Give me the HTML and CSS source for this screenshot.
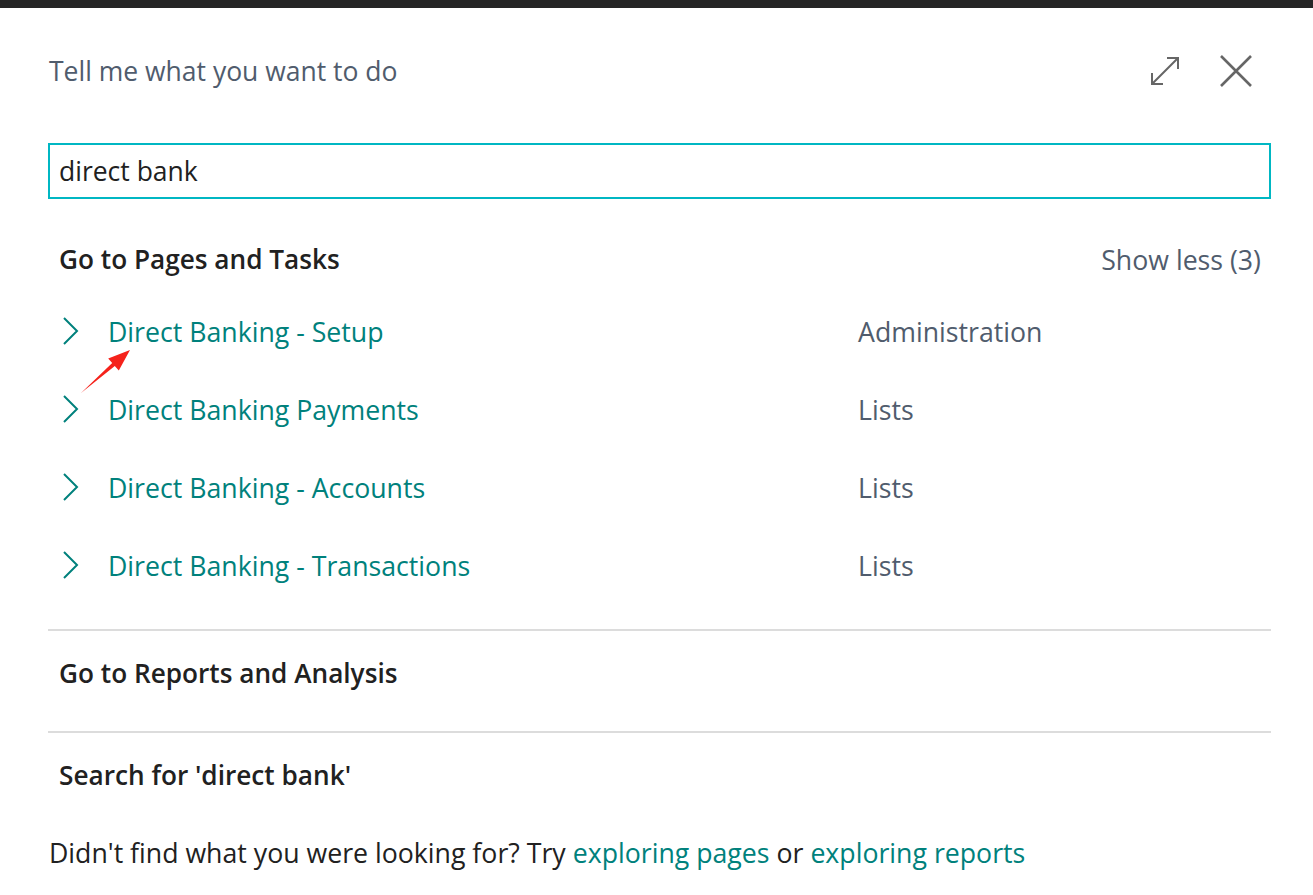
FILE: index.html
```html
<!DOCTYPE html>
<html lang="en">
<head>
    <meta charset="UTF-8">
    <meta name="viewport" content="width=device-width, initial-scale=1.0">
    <title>Tell me what you want to do</title>
    <link rel="stylesheet" href="styles.css">
</head>
<body>
    <div class="topbar"></div>
    <div class="dialog">
        <div class="dialog-header">
            <h1>Tell me what you want to do</h1>
            <div class="header-actions">
                <button class="icon-btn" title="Expand">
                    <svg width="30" height="30" viewBox="0 0 30 30">
                        <path d="M2 28 L28 2 M17 2 H28 V13 M2 17 V28 H13" fill="none" stroke="#666" stroke-width="2"/>
                    </svg>
                </button>
                <button class="icon-btn" title="Close">
                    <svg width="32" height="32" viewBox="0 0 32 32">
                        <path d="M1 1 L31 31 M31 1 L1 31" fill="none" stroke="#666" stroke-width="2.6"/>
                    </svg>
                </button>
            </div>
        </div>

        <div class="search">
            <input type="text" value="direct bank">
        </div>

        <div class="group">
            <div class="group-head">
                <h2>Go to Pages and Tasks</h2>
                <a class="show-less" href="#">Show less (3)</a>
            </div>
            <ul class="results">
                <li class="result">
                    <svg class="chevron" width="16" height="28" viewBox="0 0 16 28"><path d="M1 1 L14 14 L1 27" fill="none" stroke="#00817c" stroke-width="2"/></svg>
                    <a class="result-link" href="#">Direct Banking - Setup</a>
                    <span class="category">Administration</span>
                </li>
                <li class="result">
                    <svg class="chevron" width="16" height="28" viewBox="0 0 16 28"><path d="M1 1 L14 14 L1 27" fill="none" stroke="#00817c" stroke-width="2"/></svg>
                    <a class="result-link" href="#">Direct Banking Payments</a>
                    <span class="category">Lists</span>
                </li>
                <li class="result">
                    <svg class="chevron" width="16" height="28" viewBox="0 0 16 28"><path d="M1 1 L14 14 L1 27" fill="none" stroke="#00817c" stroke-width="2"/></svg>
                    <a class="result-link" href="#">Direct Banking - Accounts</a>
                    <span class="category">Lists</span>
                </li>
                <li class="result">
                    <svg class="chevron" width="16" height="28" viewBox="0 0 16 28"><path d="M1 1 L14 14 L1 27" fill="none" stroke="#00817c" stroke-width="2"/></svg>
                    <a class="result-link" href="#">Direct Banking - Transactions</a>
                    <span class="category">Lists</span>
                </li>
            </ul>
        </div>

        <div class="group divided">
            <h2>Go to Reports and Analysis</h2>
        </div>

        <div class="group divided">
            <h2>Search for 'direct bank'</h2>
        </div>

        <p class="footer-note">Didn't find what you were looking for? Try <a href="#">exploring pages</a> or <a href="#">exploring reports</a></p>
    </div>

    <!-- red annotation arrow -->
    <svg class="annotation" width="60" height="54" viewBox="78 346 60 54">
        <polygon points="81,393 114.8,366 118.8,370.5 130,350 108.2,358.5 112.2,363" fill="#f5221b"/>
    </svg>
</body>
</html>
```

FILE: styles.css
```css
body {
    margin: 0;
    font-family: "Open Sans", "Noto Sans", sans-serif;
    font-size: 26.7px;
    color: #212121;
    background-color: #fff;
}

.topbar {
    height: 8px;
    background-color: #262626;
}

.dialog {
    padding: 0 42px 0 48px;
}

.dialog-header {
    display: flex;
    justify-content: space-between;
    align-items: center;
    margin-top: 43px;
    height: 40px;
}

h1 {
    margin: 0 0 0 1px;
    font-size: 26.5px;
    font-weight: 400;
    color: #505c6d;
}

.header-actions {
    display: flex;
    align-items: center;
    gap: 40px;
    margin-right: 19px;
}

.icon-btn {
    border: 0;
    padding: 0;
    background: none;
    display: flex;
    cursor: pointer;
}

.search {
    margin-top: 52px;
}

.search input {
    box-sizing: border-box;
    width: 100%;
    height: 56px;
    border: 2px solid #00b7c3;
    padding: 0 9px;
    font-family: "Open Sans", "Noto Sans", sans-serif;
    font-size: 26.5px;
    color: #212121;
    outline: none;
}

.group {
    padding: 40px 0 0 11px;
}

.group h2 {
    margin: 0;
    font-size: 26.2px;
    font-weight: 600;
    line-height: 40px;
}

.group-head {
    display: flex;
    justify-content: space-between;
    align-items: center;
    padding-right: 10px;
}

.show-less {
    color: #505c6d;
    text-decoration: none;
}

.results {
    list-style: none;
    margin: 13px 0 25px;
    padding: 0;
}

.result {
    display: flex;
    align-items: center;
    height: 78px;
}

.chevron {
    margin-left: 4px;
    width: 16px;
}

.result-link {
    margin-left: 29px;
    width: 750px;
    color: #00817c;
    text-decoration: none;
}

.category {
    color: #505c6d;
}

.group.divided {
    padding: 22px 0 38px 11px;
    border-top: 2px solid #dcdcdc;
}

.group.divided:last-of-type {
    padding-bottom: 0;
}

.footer-note {
    margin: 38px 0 0 1px;
    line-height: 40px;
}

.footer-note a {
    color: #00817c;
    text-decoration: none;
}

.annotation {
    position: absolute;
    left: 78px;
    top: 346px;
}
```
